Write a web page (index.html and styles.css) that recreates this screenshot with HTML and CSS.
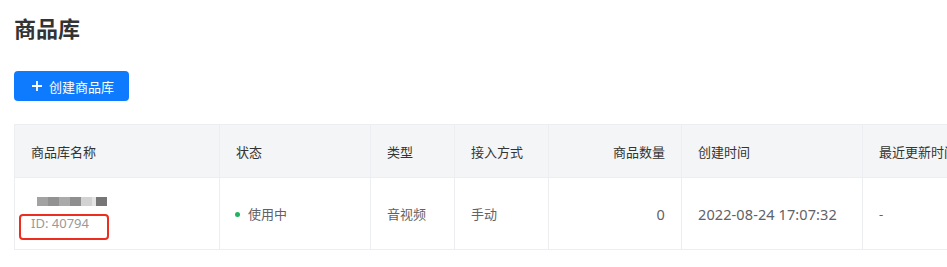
FILE: index.html
```html
<!DOCTYPE html>
<html lang="zh-CN">

<head>
    <meta charset="UTF-8">
    <meta name="viewport" content="width=device-width, initial-scale=1.0">
    <title>商品库</title>
    <link rel="stylesheet" href="styles.css">
</head>

<body>
    <div class="page">
        <h2 class="page-title">商品库</h2>

        <div class="toolbar">
            <button class="btn-primary" type="button">
                <svg class="btn-icon" viewBox="0 0 12 12" width="12" height="12">
                    <path d="M6 1v10M1 6h10" stroke="#fff" stroke-width="1.8" fill="none" />
                </svg>
                创建商品库
            </button>
        </div>

        <table class="lib-table">
            <colgroup>
                <col style="width: 205px">
                <col style="width: 151px">
                <col style="width: 84px">
                <col style="width: 94px">
                <col style="width: 133px">
                <col style="width: 181px">
                <col style="width: 160px">
            </colgroup>
            <thead>
                <tr>
                    <th>商品库名称</th>
                    <th>状态</th>
                    <th>类型</th>
                    <th>接入方式</th>
                    <th class="num">商品数量</th>
                    <th>创建时间</th>
                    <th>最近更新时间</th>
                </tr>
            </thead>
            <tbody>
                <tr>
                    <td class="name-cell">
                        <div class="name-blur">
                            <span class="px" style="background:#a2a2a2"></span>
                            <span class="px" style="background:#929292"></span>
                            <span class="px" style="background:#aaaaaa"></span>
                            <span class="px" style="background:#8e8e8e"></span>
                            <span class="px" style="background:#d2d2d2"></span>
                            <span class="px px-sm" style="background:#e4e4e4"></span>
                            <span class="px" style="background:#767676"></span>
                        </div>
                        <div class="lib-id">ID: 40794</div>
                        <span class="mark"></span>
                    </td>
                    <td><span class="dot"></span>使用中</td>
                    <td>音视频</td>
                    <td>手动</td>
                    <td class="num digits">0</td>
                    <td class="digits">2022-08-24 17:07:32</td>
                    <td>-</td>
                </tr>
            </tbody>
        </table>
    </div>
</body>

</html>
```

FILE: styles.css
```css
/* Page layout */
body {
    margin: 0;
    padding: 0;
    background-color: #fff;
    font-family: "Noto Sans", "Noto Sans CJK SC", sans-serif;
    overflow: hidden;
}

.page {
    padding: 0 14px;
    width: 1100px;
}

.page-title {
    margin: 0;
    padding-top: 11px;
    font-size: 22px;
    line-height: 32px;
    font-weight: bold;
    color: #333;
    font-family: "Noto Sans CJK SC", sans-serif;
}

.toolbar {
    margin-top: 28px;
}

.btn-primary {
    display: flex;
    align-items: center;
    gap: 6px;
    height: 30px;
    padding: 0 15px 0 17px;
    border: none;
    border-radius: 4px;
    background-color: #0e7bff;
    color: #fff;
    font-size: 13px;
    font-family: "Noto Sans CJK SC", sans-serif;
    cursor: pointer;
}

/* Table */
.lib-table {
    margin-top: 23px;
    border-collapse: collapse;
    table-layout: fixed;
    width: 1008px;
    font-size: 13px;
}

.lib-table th,
.lib-table td {
    padding: 0 16px;
    text-align: left;
    border: 1px solid #eceef1;
    white-space: nowrap;
    overflow: hidden;
}

.lib-table th {
    height: 52px;
    background-color: #f4f5f7;
    color: #333;
    font-weight: normal;
    font-family: "Noto Sans CJK SC", sans-serif;
}

.lib-table td {
    height: 71px;
    color: #606266;
    font-family: "Noto Sans", "Noto Sans CJK SC", sans-serif;
}

.lib-table .num {
    text-align: right;
}

.lib-table .digits {
    font-size: 14.5px;
    letter-spacing: 0.1px;
}

.name-cell {
    position: relative;
}

.name-blur {
    display: flex;
    margin-left: 6px;
    margin-top: 2px;
    height: 9px;
}

.px {
    width: 11px;
    height: 9px;
}

.px-sm {
    width: 4px;
}

.lib-id {
    margin-top: 8px;
    color: #999;
    line-height: 18px;
}

.mark {
    position: absolute;
    left: 4px;
    top: 36px;
    width: 86px;
    height: 22px;
    border: 2px solid #ec2d20;
    border-radius: 4px;
}

.dot {
    display: inline-block;
    width: 5px;
    height: 5px;
    margin-right: 8px;
    margin-left: -1px;
    border-radius: 50%;
    background-color: #22b35e;
    vertical-align: middle;
    position: relative;
    top: -1px;
}
```
